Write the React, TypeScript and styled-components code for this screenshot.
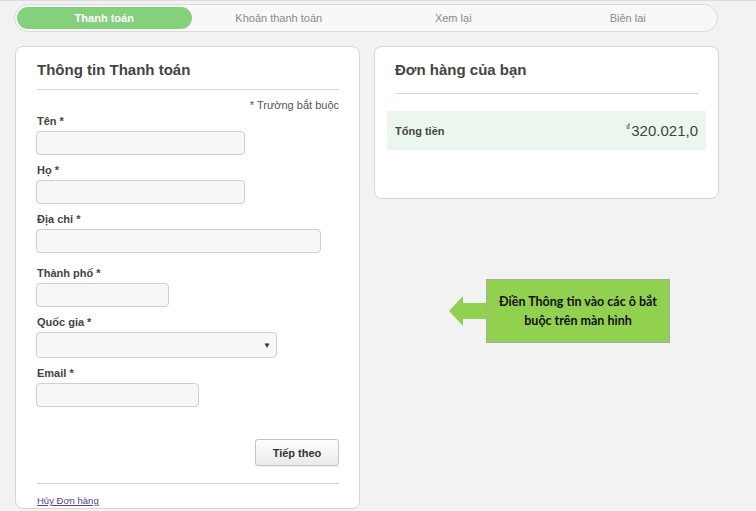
import React from "react";
import styled, { createGlobalStyle } from "styled-components";

const GlobalStyle = createGlobalStyle`
  html, body {
    margin: 0;
    padding: 0;
    background: #f2f2f2;
    font-family: "Liberation Sans", Arial, sans-serif;
    color: #444;
  }
  * { box-sizing: border-box; }
`;

const Page = styled.div`
  position: relative;
  width: 756px;
  height: 511px;
  overflow: hidden;
  padding: 3px 0 0 15px;
  border-top: 1px solid #dcdcdc;
`;

const Steps = styled.div`
  display: grid;
  grid-template-columns: repeat(4, 1fr);
  width: 704px;
  height: 28px;
  margin-left: -1px;
  padding: 2px;
  background: #f8f8f8;
  border: 1px solid #dadada;
  border-radius: 14px;
`;

const Step = styled.div<{ $active?: boolean }>`
  display: flex;
  align-items: center;
  justify-content: center;
  border-radius: 11px;
  font-size: 11px;
  font-weight: ${(p) => (p.$active ? "bold" : "normal")};
  color: ${(p) => (p.$active ? "#fff" : "#8a8a8a")};
  background: ${(p) => (p.$active ? "#84d07c" : "transparent")};
`;

const Columns = styled.div`
  display: flex;
  align-items: flex-start;
  gap: 14px;
  margin-top: 14px;
`;

const Card = styled.div<{ $height?: number; $padLeft: number }>`
  width: 345px;
  height: ${(p) => (p.$height ? `${p.$height}px` : "auto")};
  background: #fff;
  border: 1px solid #d6d6d6;
  border-radius: 8px;
  padding: 13px 20px 0 ${(p) => p.$padLeft}px;
`;

const Title = styled.h2`
  margin: 0;
  font-size: 15px;
  line-height: 20px;
  font-weight: bold;
  color: #444;
`;

const Rule = styled.div<{ $top: number }>`
  height: 1px;
  background: #d4d4d4;
  margin-top: ${(p) => p.$top}px;
`;

const Required = styled.div`
  margin-top: 8px;
  text-align: right;
  font-size: 11px;
  line-height: 14px;
  color: #555;
`;

const Field = styled.div<{ $gap: number }>`
  display: flex;
  flex-direction: column;
  margin-top: ${(p) => p.$gap}px;
`;

const Label = styled.label`
  font-size: 11px;
  line-height: 14px;
  font-weight: bold;
  color: #444;
  margin-bottom: 3px;
`;

const Input = styled.div<{ $w: number; $h?: number }>`
  position: relative;
  width: ${(p) => p.$w}px;
  height: ${(p) => p.$h ?? 24}px;
  margin-left: -1px;
  background: #f7f7f7;
  border: 1px solid #cfcfcf;
  border-radius: 4px;
`;

const Caret = styled.span`
  position: absolute;
  right: 5px;
  top: 50%;
  transform: translateY(-50%);
  font-size: 8px;
  color: #333;
`;

const Actions = styled.div`
  display: flex;
  justify-content: flex-end;
  margin-top: 32px;
`;

const Button = styled.button`
  width: 84px;
  height: 27px;
  font-family: inherit;
  font-size: 11px;
  font-weight: bold;
  color: #333;
  background: linear-gradient(#ffffff, #e9e9e9);
  border: 1px solid #c4c4c4;
  border-radius: 3px;
  box-shadow: 0 1px 1px rgba(0, 0, 0, 0.08);
`;

const CancelLink = styled.a`
  display: block;
  margin-top: 10px;
  font-size: 9.5px;
  line-height: 14px;
  color: #5b3e8a;
  text-decoration: underline;
`;

const TotalRow = styled.div`
  display: flex;
  align-items: center;
  justify-content: space-between;
  height: 39px;
  margin: 17px -8px 0 -8px;
  padding: 0 8px;
  background: #ebf7ec;
`;

const TotalLabel = styled.span`
  font-size: 11px;
  font-weight: bold;
  color: #444;
`;

const Amount = styled.span`
  font-size: 15px;
  color: #444;
  margin-top: -1px;
`;

const Currency = styled.sup`
  font-size: 9px;
  vertical-align: 6px;
  margin-right: 1px;
`;

const Callout = styled.div`
  position: absolute;
  left: 449px;
  top: 278px;
  display: flex;
  align-items: center;
`;

const CalloutBox = styled.div`
  width: 184px;
  height: 64px;
  display: flex;
  align-items: center;
  justify-content: center;
  text-align: center;
  background: #92d050;
  border: 1px solid #a9a9a9;
  font-family: Lato, "Open Sans", sans-serif;
  font-weight: bold;
  font-size: 12.5px;
  line-height: 19px;
  color: #111;
  padding: 0 8px;
`;

const fields = [
  { label: "Tên", w: 209, gap: 2 },
  { label: "Họ", w: 209, gap: 8 },
  { label: "Địa chỉ", w: 285, gap: 8 },
  { label: "Thành phố", w: 133, gap: 13 },
  { label: "Quốc gia", w: 241, gap: 8, h: 26, select: true },
  { label: "Email", w: 163, gap: 8 },
];

export default function App() {
  return (
    <Page>
      <GlobalStyle />
      <Steps>
        <Step $active>Thanh toán</Step>
        <Step>Khoản thanh toán</Step>
        <Step>Xem lại</Step>
        <Step>Biên lai</Step>
      </Steps>
      <Columns>
        <Card $padLeft={21}>
          <Title>Thông tin Thanh toán</Title>
          <Rule $top={9} />
          <Required>* Trường bắt buộc</Required>
          {fields.map((f) => (
            <Field key={f.label} $gap={f.gap}>
              <Label>{f.label} *</Label>
              <Input $w={f.w} $h={f.h}>
                {f.select && <Caret>▼</Caret>}
              </Input>
            </Field>
          ))}
          <Actions>
            <Button>Tiếp theo</Button>
          </Actions>
          <Rule $top={17} />
          <CancelLink href="#">Hủy Đơn hàng</CancelLink>
        </Card>
        <Card $height={153} $padLeft={20}>
          <Title>Đơn hàng của bạn</Title>
          <Rule $top={13} />
          <TotalRow>
            <TotalLabel>Tổng tiền</TotalLabel>
            <Amount>
              <Currency>₫</Currency>320.021,0
            </Amount>
          </TotalRow>
        </Card>
      </Columns>
      <Callout>
        <svg width="37" height="32" viewBox="0 0 37 32">
          <polygon points="0,16 14,1 14,8 37,8 37,24 14,24 14,31" fill="#92d050" />
        </svg>
        <CalloutBox>Điền Thông tin vào các ô bắt buộc trên màn hình</CalloutBox>
      </Callout>
    </Page>
  );
}
